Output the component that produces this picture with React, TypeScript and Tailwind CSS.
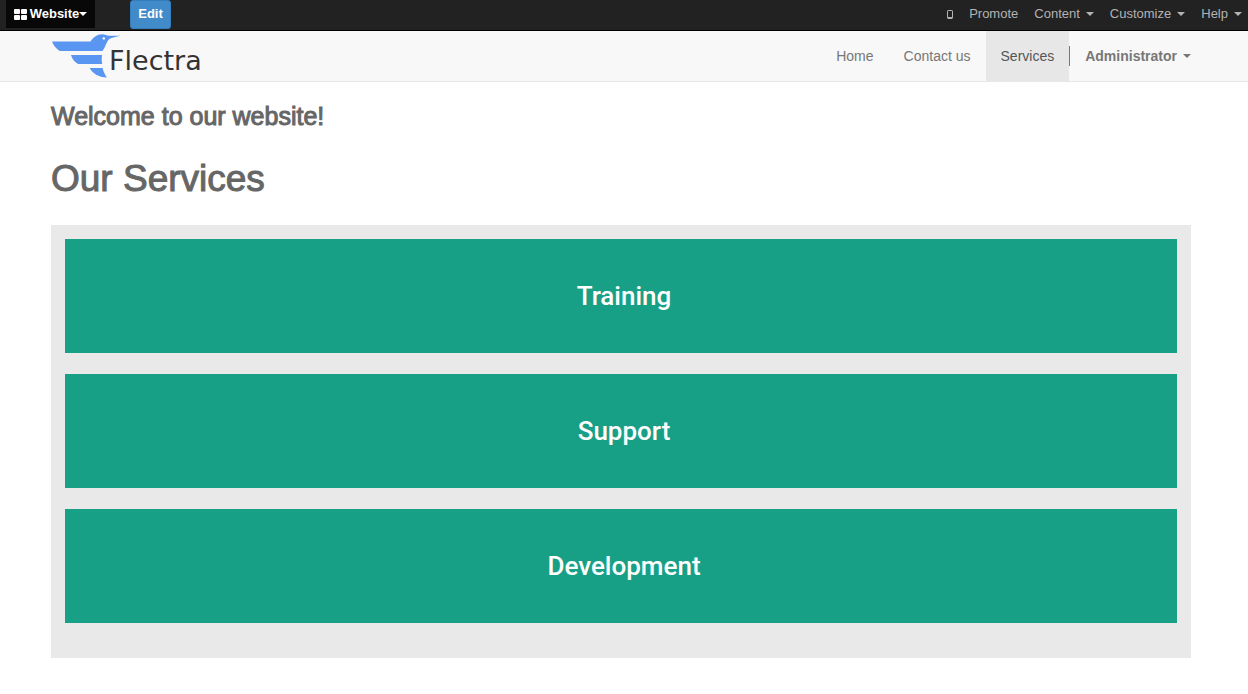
import React from "react";

const editorMenus = ["Content", "Customize", "Help"];
const services = ["Training", "Support", "Development"];

function Caret() {
  return (
    <span
      aria-hidden="true"
      className="inline-block h-0 w-0 border-x-4 border-t-4 border-x-transparent border-t-current"
    />
  );
}

function GridIcon() {
  return (
    <svg aria-hidden="true" viewBox="0 0 13 11" className="h-[11px] w-[13px]" fill="currentColor">
      <rect x="0" y="0" width="6" height="5" rx="1" />
      <rect x="7" y="0" width="6" height="5" rx="1" />
      <rect x="0" y="6" width="6" height="5" rx="1" />
      <rect x="7" y="6" width="6" height="5" rx="1" />
    </svg>
  );
}

function MobileIcon() {
  return (
    <svg aria-hidden="true" viewBox="0 0 6 9" className="h-[9px] w-[6px]">
      <rect x="0.5" y="0.5" width="5" height="8" rx="0.6" fill="none" stroke="currentColor" />
      <path d="M1 7.5h4" stroke="currentColor" />
    </svg>
  );
}

function Bird() {
  return (
    <svg aria-hidden="true" viewBox="52 34 69 44" className="h-11 w-[69px] shrink-0">
      <g fill="#5896f2">
        <path d="M52 41.5H90.5C93 37.6 97 34.3 102 34.3C105 34.3 107 35.5 109 35.8L120.5 35.7C116 37 112 37.3 109.3 39C106 42 105.5 47.5 102.4 51H59.8C56.5 49 53.5 45.5 52 41.5Z" />
        <path d="M71 55H102C101.6 58 101.6 61 102.2 64H78C74.5 62 72 59 71 55Z" />
        <path d="M89.7 68H102.6C103.3 71.2 104.8 74.5 106.9 77.6C98.5 77.2 92.5 73.5 89.7 68Z" />
      </g>
      <circle cx="103.8" cy="38.4" r="1.2" fill="#fff" />
    </svg>
  );
}

export default function App() {
  return (
    <div className="min-h-screen bg-white font-['Liberation_Sans',Arial,sans-serif] text-sm text-[#666]">
      <header>
        <div className="flex h-[31px] items-start justify-between border-b border-black bg-[#222] pl-1.5 text-[13px]">
          <div className="flex items-start">
            <button
              type="button"
              className="flex h-7 w-[89px] items-center justify-center gap-[3px] bg-[#080808] font-bold text-white"
            >
              <GridIcon />
              <span className="flex items-center">
                Website
                <Caret />
              </span>
            </button>
            <button
              type="button"
              className="ml-[35px] h-[29px] w-[41px] rounded-[3px] border border-[#357ebd] bg-[#428bca] font-bold text-white"
            >
              Edit
            </button>
          </div>
          <nav aria-label="Editor" className="flex h-7 items-center gap-4 pr-1.5 text-[#b3b3b3]">
            <button type="button" aria-label="Mobile preview">
              <MobileIcon />
            </button>
            <button type="button">Promote</button>
            {editorMenus.map((item) => (
              <button key={item} type="button" className="flex items-center gap-1.5">
                {item}
                <Caret />
              </button>
            ))}
          </nav>
        </div>

        <div className="flex h-[51px] items-stretch justify-between border-b border-[#e7e7e7] bg-[#f8f8f8] pr-[57px] pl-[52px]">
          <a href="#home" className="flex items-center">
            <Bird />
            <span className="-ml-3.5 pt-2.5 pl-0.5 font-['DejaVu_Sans',sans-serif] text-[27px] leading-9 text-[#333]">
              Flectra
            </span>
          </a>
          <nav aria-label="Main" className="flex items-stretch text-[#777]">
            <a href="#home" className="flex items-center px-[15px]">
              Home
            </a>
            <a href="#contact" className="flex items-center px-[15px]">
              Contact us
            </a>
            <a
              href="#services"
              aria-current="page"
              className="flex items-center bg-[#e7e7e7] px-[15px] text-[#555]"
            >
              Services
            </a>
            <span className="h-5 w-px self-center bg-[#777]" />
            <button type="button" className="flex items-center gap-1.5 pl-[15px] font-bold">
              Administrator
              <Caret />
            </button>
          </nav>
        </div>
      </header>

      <main className="pt-5 pr-[57px] pb-9 pl-[51px]">
        <h3 className="text-[25px] leading-7 [-webkit-text-stroke:1px]">Welcome to our website!</h3>
        <h1 className="mt-7 text-[37px] leading-[42px] [-webkit-text-stroke:1px]">Our Services</h1>
        <div className="mt-[25px] flex flex-col gap-[21px] bg-[#e9e9e9] px-3.5 pt-3.5 pb-[35px]">
          {services.map((service) => (
            <section
              key={service}
              className="flex h-[114px] items-center justify-center bg-[#18a086] pl-1.5 text-white"
            >
              <h2 className="font-['Roboto',sans-serif] text-[26px] leading-8 font-medium">
                {service}
              </h2>
            </section>
          ))}
        </div>
      </main>
    </div>
  );
}
